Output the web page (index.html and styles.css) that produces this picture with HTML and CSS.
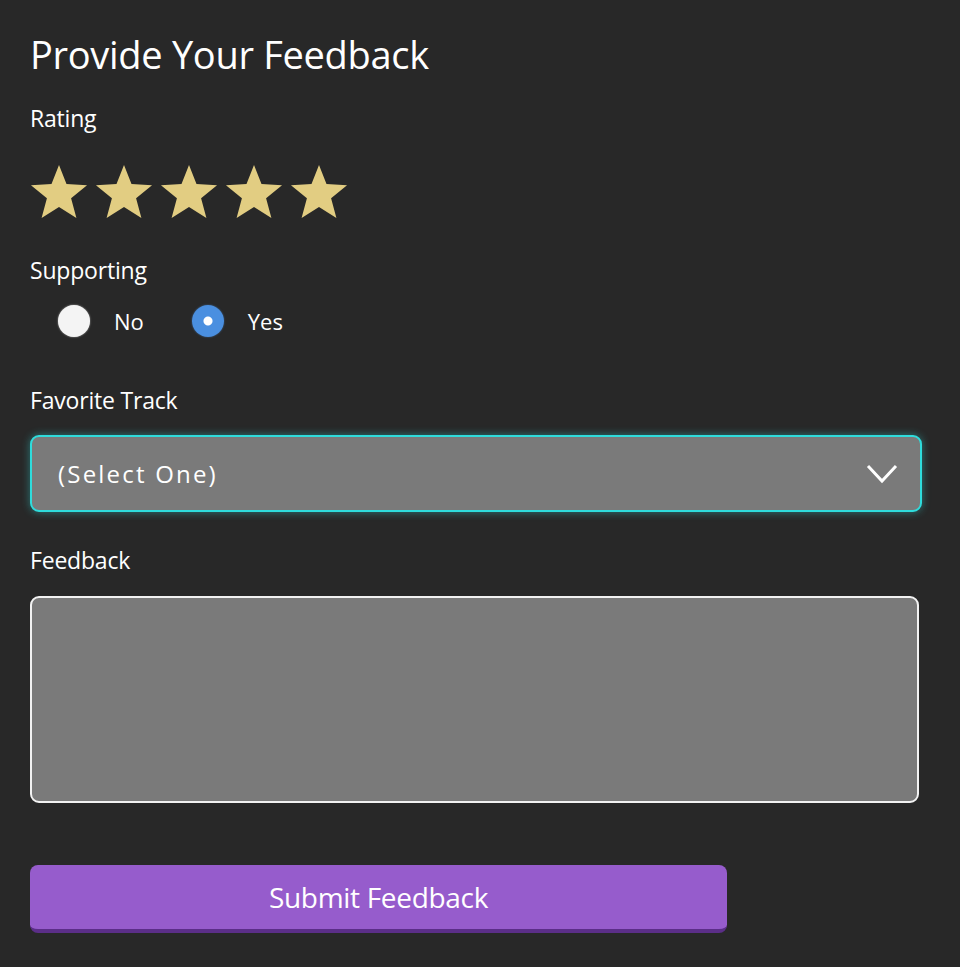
FILE: index.html
```html
<!DOCTYPE html>
<html lang="en">
<head>
  <meta charset="UTF-8" />
  <title>Provide Your Feedback</title>
  <link rel="stylesheet" href="styles.css">
</head>
<body>
  <form class="feedback">
    <h1>Provide Your Feedback</h1>

    <div class="field">
      <span class="label">Rating</span>
      <div class="stars" aria-label="5 of 5 stars">
        <svg viewBox="0 0 24 24" aria-hidden="true"><path d="M12 1.2l3.1 7.9 8.5.5-6.6 5.4 2.2 8.2L12 18.6l-7.2 4.6 2.2-8.2L.4 9.6l8.5-.5z"/></svg>
        <svg viewBox="0 0 24 24" aria-hidden="true"><path d="M12 1.2l3.1 7.9 8.5.5-6.6 5.4 2.2 8.2L12 18.6l-7.2 4.6 2.2-8.2L.4 9.6l8.5-.5z"/></svg>
        <svg viewBox="0 0 24 24" aria-hidden="true"><path d="M12 1.2l3.1 7.9 8.5.5-6.6 5.4 2.2 8.2L12 18.6l-7.2 4.6 2.2-8.2L.4 9.6l8.5-.5z"/></svg>
        <svg viewBox="0 0 24 24" aria-hidden="true"><path d="M12 1.2l3.1 7.9 8.5.5-6.6 5.4 2.2 8.2L12 18.6l-7.2 4.6 2.2-8.2L.4 9.6l8.5-.5z"/></svg>
        <svg viewBox="0 0 24 24" aria-hidden="true"><path d="M12 1.2l3.1 7.9 8.5.5-6.6 5.4 2.2 8.2L12 18.6l-7.2 4.6 2.2-8.2L.4 9.6l8.5-.5z"/></svg>
      </div>
    </div>

    <div class="field">
      <span class="label">Supporting</span>
      <div class="radios">
        <label class="radio"><span class="dot"></span>No</label>
        <label class="radio"><span class="dot checked"></span>Yes</label>
      </div>
    </div>

    <div class="field">
      <label class="label" for="track">Favorite Track</label>
      <div class="select">
        <span id="track">(Select One)</span>
        <svg viewBox="0 0 32 20" aria-hidden="true"><path d="M2 2l14 15L30 2"/></svg>
      </div>
    </div>

    <div class="field">
      <label class="label" for="msg">Feedback</label>
      <textarea id="msg"></textarea>
    </div>

    <button type="button" class="submit">Submit Feedback</button>
  </form>
</body>
</html>
```

FILE: styles.css
```css
*, *::before, *::after {
  box-sizing: border-box;
}
body {
  margin: 0;
  background: #282828;
  color: #fff;
  font-family: 'Open Sans', 'Noto Sans', sans-serif;
  width: 960px;
  height: 967px;
  overflow: hidden;
}

.feedback {
  padding: 26px 0 0 30px;
  display: flex;
  flex-direction: column;
}

h1 {
  margin: 0 0 21px;
  font-size: 38px;
  font-weight: 400;
  line-height: 56px;
  letter-spacing: -0.3px;
}

.field {
  display: flex;
  flex-direction: column;
}

.label {
  font-size: 23px;
  font-weight: 500;
  line-height: 30px;
  letter-spacing: -0.2px;
}


.stars {
  display: flex;
  gap: 7px;
  margin: 29px 0 35px;
}
.stars svg {
  width: 58px;
  height: 58px;
  fill: #e2cd82;
}


.radios {
  display: flex;
  gap: 48px;
  margin: 20px 0 48px 28px;
}
.radio {
  display: flex;
  align-items: center;
  gap: 24px;
  font-size: 22px;
  font-weight: 500;
}
.dot {
  width: 32px;
  height: 32px;
  border-radius: 50%;
  background: #f4f4f4;
  box-shadow: 0 0 2px rgba(255, 255, 255, 0.6);
}
.dot.checked {
  background: radial-gradient(circle, #fff 0 4px, #4a8fe0 5px);
  box-shadow: 0 0 2px rgba(74, 143, 224, 0.6);
}


.select {
  margin: 20px 0 33px;
  width: 892px;
  height: 77px;
  background: #7a7a7a;
  border: 2px solid #2fdcdc;
  border-radius: 9px;
  box-shadow: 0 0 8px rgba(47, 220, 220, 0.45);
  display: flex;
  align-items: center;
  justify-content: space-between;
  padding: 0 22px 0 26px;
  font-size: 24px;
  letter-spacing: 2.2px;
}
.select svg {
  width: 32px;
  height: 20px;
  fill: none;
  stroke: #fff;
  stroke-width: 3;
}


textarea {
  margin-top: 21px;
  width: 889px;
  height: 207px;
  background: #7a7a7a;
  border: 2px solid #f2f2f2;
  border-radius: 9px;
  resize: none;
  outline: none;
}


.submit {
  margin-top: 62px;
  width: 697px;
  height: 68px;
  background: #965ccc;
  border: none;
  border-bottom: 4px solid #5b2e88;
  border-radius: 8px;
  color: #fff;
  font-family: inherit;
  font-size: 28px;
  font-weight: 500;
  letter-spacing: -0.3px;
  cursor: pointer;
}
```
